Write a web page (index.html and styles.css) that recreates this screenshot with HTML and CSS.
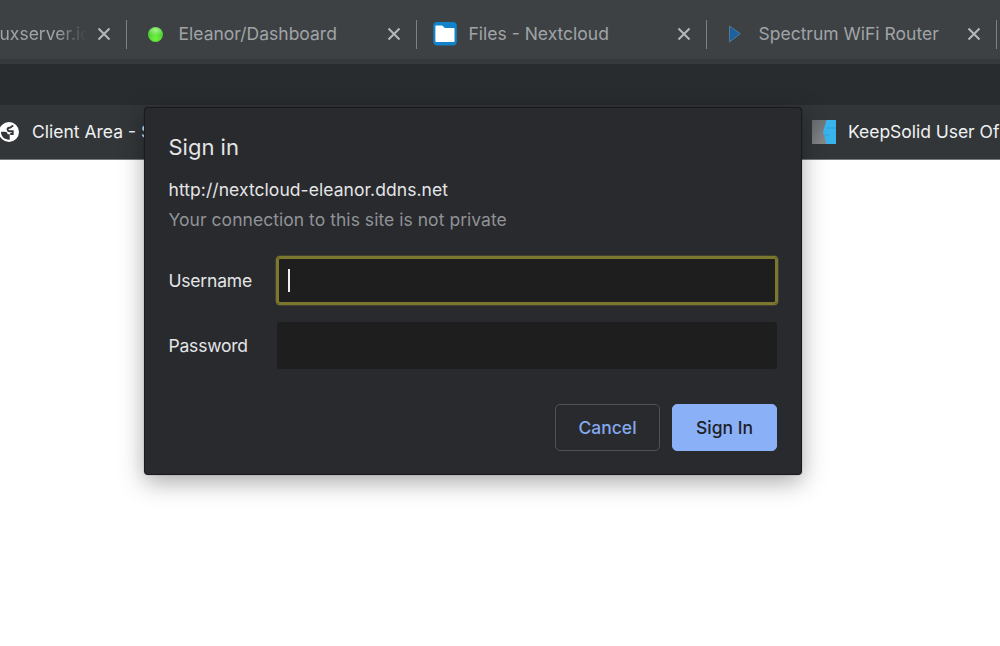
FILE: index.html
```html
<!DOCTYPE html>
<html lang="en">
<head>
<meta charset="utf-8">
<title>Sign in</title>
<link rel="stylesheet" href="styles.css">
</head>
<body>
<div class="browser">
  <div class="tabs">
    <div class="tab tab-first">
      <span class="tab-title fade">uxserver.io</span>
      <svg class="close" viewBox="0 0 14 14"><path d="M1.5 1.5l11 11M12.5 1.5l-11 11"/></svg>
    </div>
    <div class="tab">
      <span class="favicon"><span class="status-dot"></span></span>
      <span class="tab-title">Eleanor/Dashboard</span>
      <svg class="close" viewBox="0 0 14 14"><path d="M1.5 1.5l11 11M12.5 1.5l-11 11"/></svg>
    </div>
    <div class="tab">
      <svg class="favicon" viewBox="0 0 24 24"><rect x=".3" y="0" width="23.5" height="23.5" rx="4" fill="#1282cb"/><path d="M3 3.500h6.200l2.600 2.500h8.900q.8 0 .8.8v12.400q0 .8-.8.8H3.200q-.8 0-.8-.8V4.100q0-.6.6-.6z" fill="#fff"/></svg>
      <span class="tab-title">Files - Nextcloud</span>
      <svg class="close" viewBox="0 0 14 14"><path d="M1.5 1.5l11 11M12.5 1.5l-11 11"/></svg>
    </div>
    <div class="tab">
      <svg class="favicon" viewBox="0 0 24 24"><path d="M6.500 4v16l10.800-8.300z" fill="#1c60a0" stroke="#557892" stroke-width="1"/></svg>
      <span class="tab-title">Spectrum WiFi Router</span>
      <svg class="close" viewBox="0 0 14 14"><path d="M1.5 1.5l11 11M12.5 1.5l-11 11"/></svg>
    </div>
  </div>
  <div class="tab-base"></div>
  <div class="toolbar"></div>
  <div class="bookmarks">
    <div class="bookmark client">
      <svg class="globe" viewBox="0 0 20 20"><circle cx="10" cy="10" r="10" fill="#fff"/><path d="M2 9.800H5.500q3 0 3 2.400h2.200v5.600C5.800 18 1.700 14.300 2 9.800z" fill="#323639"/><path d="M14.300 3.800C12 4 12.500 5.600 10.200 5.800 7.800 6.200 8.200 9 10.500 9.300h3.200v2.700h-2.500" fill="none" stroke="#323639" stroke-width="1.900"/></svg>
      <span>Client Area - S</span>
    </div>
    <div class="bookmark keepsolid">
      <svg class="ks-icon" viewBox="0 0 24 24"><defs><linearGradient id="steel" x2="1" y2="1"><stop stop-color="#666a6d"/><stop offset="1" stop-color="#929395"/></linearGradient></defs><path d="M0 0h24v24H0z" fill="url(#steel)"/><path d="M14.500 0H24v24H14.500L11 12z" fill="#38b3ec"/><path d="M15 8h9M12 15h5" stroke="#2a9dd6" stroke-width=".8"/></svg>
      <span>KeepSolid User Of</span>
    </div>
  </div>
</div>
<form class="dialog">
  <h1 class="title">Sign in</h1>
  <p class="origin">http://nextcloud-eleanor.ddns.net</p>
  <p class="warning">Your connection to this site is not private</p>
  <div class="field user-field">
    <span class="label">Username</span>
    <div class="input focused"><span class="caret"></span></div>
  </div>
  <div class="field">
    <span class="label">Password</span>
    <div class="input"></div>
  </div>
  <div class="actions">
    <button type="button" class="btn cancel">Cancel</button>
    <button type="button" class="btn primary">Sign In</button>
  </div>
</form>
</body>
</html>
```
FILE: styles.css
```css
* { box-sizing: border-box; }
body {
  margin: 0;
  width: 1000px;
  height: 646px;
  overflow: hidden;
  background: #fff;
  font-family: Inter, "Liberation Sans", sans-serif;
  font-size: 17.5px;
}
.browser { width: 1000px; overflow: hidden; }
.tabs {
  display: flex;
  height: 59px;
  padding-top: 9px;
  background: #3d4144;
  color: #a0a4a7;
}
.tab {
  position: relative;
  display: flex;
  align-items: center;
  flex: none;
  width: 290px;
  height: 50px;
  padding: 0 16px;
}
.tab::after {
  content: "";
  position: absolute;
  right: 0;
  top: 11px;
  width: 1px;
  height: 29px;
  background: #7d8184;
}
.tab-first { width: 127px; padding-left: 0; }
.tab-title { margin: 0 0 2px -.5px; white-space: nowrap; font-weight: 430; }
.fade {
  width: 87px;
  -webkit-mask-image: linear-gradient(90deg, #000 65%, transparent 99%);
  mask-image: linear-gradient(90deg, #000 65%, transparent 99%);
}
.favicon {
  display: flex;
  align-items: center;
  justify-content: center;
  flex: none;
  width: 24px;
  height: 24px;
  margin-right: 12px;
}
.status-dot {
  width: 15px;
  height: 15px;
  border-radius: 50%;
  background: radial-gradient(ellipse 60% 40% at 50% 20%, #a8f58b, transparent), radial-gradient(circle at 50% 75%, #72f540, #3cc42c 75%);
}
.close {
  width: 14px;
  height: 14px;
  flex: none;
  margin-left: auto;
  fill: none;
  stroke: #b5b8bb;
  stroke-width: 2;
}
.tab-base { height: 5px; background: #35393c; }
.toolbar { height: 41px; background: #282c2f; }
.bookmarks {
  display: flex;
  height: 55px;
  border-bottom: 1px solid #77797b;
  background: #323639;
  color: #f0f1f2;
  font-weight: 430;
}
.bookmark { display: flex; align-items: center; flex: none; white-space: nowrap; height: 53px; }
.client { width: 812px; }
.globe { width: 20px; height: 20px; margin: 0 13px 0 -1px; }
.ks-icon { width: 24px; height: 24px; margin-right: 12px; }
.keepsolid { letter-spacing: -.03px; }
.dialog {
  position: absolute;
  left: 144px;
  top: 107px;
  width: 658px;
  height: 368px;
  padding: 25px 24px 24px 23.5px;
  border: 1px solid #191a1c;
  border-radius: 4px;
  background: #292a2d;
  box-shadow: 0 0 1px rgba(0,0,0,.6), 0 7px 24px rgba(0,0,0,.34);
  color: #e4e5e7;
  font-weight: 430;
}
.title { margin: 0; font-size: 22px; line-height: 28px; font-weight: 430; }
.origin { margin: 17px 0 0; line-height: 24px; letter-spacing: .06px; }
.warning { margin: 6px 0 0; line-height: 24px; color: #8f9397; letter-spacing: .04px; }
.field { display: flex; align-items: center; height: 47px; }
.user-field { margin: 25px 0 18px; }
.label { width: 108.5px; flex: none; letter-spacing: -.2px; padding-bottom: 1px; }
.input {
  display: flex;
  align-items: center;
  flex: 1;
  height: 47px;
  border-radius: 3px;
  background: #1e1e1f;
}
.focused { box-shadow: inset 0 0 0 2px #7c772f, 0 0 0 1px #7c772f, 0 0 0 1.5px #5a5730; }
.caret { width: 2px; height: 23px; margin-left: 11px; background: #eee; }
.actions { display: flex; justify-content: flex-end; gap: 12px; margin-top: 35px; }
.btn {
  width: 105px;
  height: 47px;
  padding: 0;
  border: 1px solid #505256;
  border-radius: 5px;
  background: transparent;
  font: 500 17.5px Inter, "Liberation Sans", sans-serif;
  color: #83a9ee;
}
.primary { border-color: #8ab0f8; background: #8ab0f8; color: #202124; }
```
